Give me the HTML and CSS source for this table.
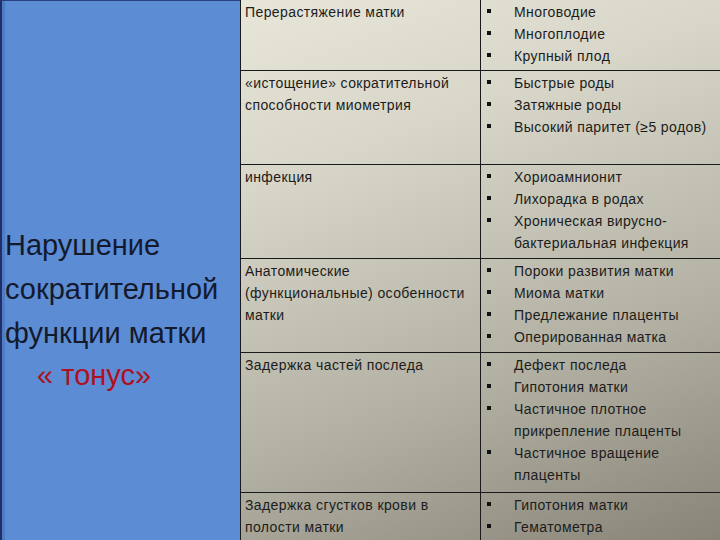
FILE: index.html
```html
<!DOCTYPE html>
<html lang="ru">
<head>
<meta charset="utf-8">
<link rel="stylesheet" href="styles.css">
</head>
<body>
<div class="slide">
  <aside class="side">
    <div class="title">
      <div>Нарушение</div>
      <div>сократительной</div>
      <div>функции матки</div>
      <div class="tone">« тонус»</div>
    </div>
  </aside>
  <main class="content">
    <table class="grid">
      <colgroup><col class="c1"><col class="c2"></colgroup>
      <tr class="r1">
        <td class="cause">Перерастяжение матки</td>
        <td class="items"><ul><li>Многоводие</li><li>Многоплодие</li><li>Крупный плод</li></ul></td>
      </tr>
      <tr class="r2">
        <td class="cause">«истощение» сократительной<br>способности миометрия</td>
        <td class="items"><ul><li>Быстрые роды</li><li>Затяжные роды</li><li>Высокий паритет (≥5 родов)</li></ul></td>
      </tr>
      <tr class="r3">
        <td class="cause">инфекция</td>
        <td class="items"><ul><li>Хориоамнионит</li><li>Лихорадка в родах</li><li>Хроническая вирусно-<br>бактериальная инфекция</li></ul></td>
      </tr>
      <tr class="r4">
        <td class="cause">Анатомические<br>(функциональные) особенности<br>матки</td>
        <td class="items"><ul><li>Пороки развития матки</li><li>Миома матки</li><li>Предлежание плаценты</li><li>Оперированная матка</li></ul></td>
      </tr>
      <tr class="r5">
        <td class="cause">Задержка частей последа</td>
        <td class="items"><ul><li>Дефект последа</li><li>Гипотония матки</li><li>Частичное плотное<br>прикрепление плаценты</li><li>Частичное вращение<br>плаценты</li></ul></td>
      </tr>
      <tr class="r6">
        <td class="cause">Задержка сгустков крови в<br>полости матки</td>
        <td class="items"><ul><li>Гипотония матки</li><li>Гематометра</li></ul></td>
      </tr>
    </table>
  </main>
</div>
</body>
</html>
```

FILE: styles.css
```css
html, body {
  margin: 0;
  padding: 0;
}
body {
  width: 720px;
  height: 540px;
  overflow: hidden;
  font-family: "Liberation Sans", Arial, sans-serif;
}
.slide {
  display: flex;
  width: 720px;
  height: 540px;
  overflow: hidden;
  background: linear-gradient(160deg, #efeddf 0%, #d8d6c8 35%, #b2b0a2 70%, #888578 100%);
}
.side {
  width: 240px;
  flex: none;
  background: #5b8cd4;
  border-left: 2px solid #1e2f6a;
  border-top: 1px solid #2a3f80;
  box-sizing: border-box;
  box-shadow: inset 3px 0 0 #4f7cc4;
}
.title {
  padding: 222px 0 0 3px;
  font-size: 29px;
  line-height: 44px;
  color: #141a2c;
}
.title .tone {
  color: #b0101e;
  padding-left: 32px;
  margin-top: -2px;
}
.content {
  flex: 1;
  min-width: 0;
}
.grid {
  border-collapse: collapse;
  table-layout: fixed;
  width: 482px;
  margin-top: -1px;
  font-size: 14px;
  letter-spacing: 0.4px;
  line-height: 22px;
  color: #1c1c1c;
}
.c1 { width: 240px; }
.c2 { width: 242px; }
.grid td {
  border: 1px solid #1a1a1a;
  vertical-align: top;
  padding: 1px 0 0 4px;
  white-space: nowrap;
  box-sizing: border-box;
}
.items {
  padding-left: 0 !important;
}
.r1 td { height: 71px; }
.r2 td, .r3 td, .r4 td { height: 94px; }
.r5 td { height: 140px; }
.r6 td { height: 60px; }
ul {
  list-style: none;
  margin: 0;
  padding: 0;
}
li {
  display: flex;
}
li::before {
  content: "";
  flex: none;
  width: 4px;
  height: 4px;
  background: #111;
  margin: 8px 23px 0 6px;
}
```
